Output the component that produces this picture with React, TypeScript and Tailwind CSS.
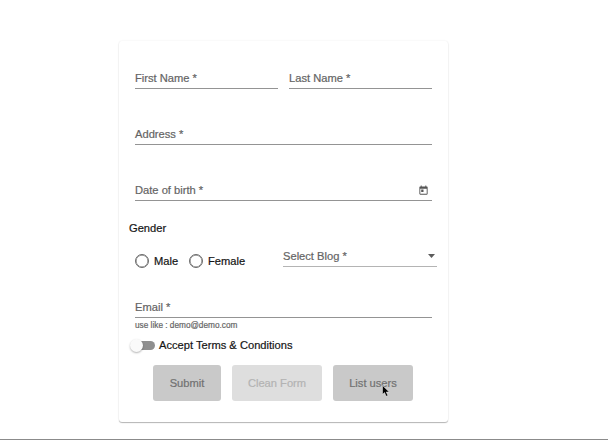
import React from "react";

function Field({ label, className = "", line = "border-[#949494]", children }: { label: string; className?: string; line?: string; children?: React.ReactNode }) {
  return (
    <label className={`flex h-[19px] items-start justify-between border-b text-[#646464] ${line} ${className}`}>
      <span className="whitespace-nowrap leading-4">{label}</span>
      {children}
    </label>
  );
}

function Radio({ label, className = "" }: { label: string; className?: string }) {
  return (
    <label className={`flex items-center gap-[5px] text-[#151515] ${className}`}>
      <span className="size-[14px] shrink-0 rounded-full border border-[#6b6b6b] shadow-[inset_0_0_0_0.5px_#6b6b6b]" />
      <span className="leading-4">{label}</span>
    </label>
  );
}

export default function App() {
  return (
    <main className="flex h-[440px] w-[608px] flex-col border-b border-[#8b8b8b] bg-white pt-[41px] font-['Liberation_Sans',Arial,sans-serif] text-[11.15px] [-webkit-text-stroke:0.2px]">
      <form className="ml-[119px] flex h-[381px] w-[329px] flex-col rounded-[3px] bg-white pt-[29px] shadow-[0_1px_1px_rgba(0,0,0,0.28),0_0_2px_rgba(0,0,0,0.08)]">
        <div className="mx-4 flex gap-[11px]">
          <Field label="First Name *" className="flex-1" />
          <Field label="Last Name *" className="flex-1" />
        </div>
        <Field label="Address *" className="mx-4 mt-[37px]" />
        <Field label="Date of birth *" className="mx-4 mt-[37px]">
          <svg className="mt-[3px] mr-[3px] size-[11px]" viewBox="0 0 24 24" fill="#555">
            <path d="M19 3h-1V1h-2v2H8V1H6v2H5c-1.1 0-2 .9-2 2v14c0 1.1.9 2 2 2h14c1.1 0 2-.9 2-2V5c0-1.1-.9-2-2-2zm0 16H5V8h14v11zM7 10h5v5H7z" />
          </svg>
        </Field>
        <div className="mt-[19px] ml-[10px] leading-4 text-[#151515]">Gender</div>
        <div className="mt-3 mr-[11px] ml-4 flex h-6 items-start">
          <Radio label="Male" className="mt-[5px] w-[54px]" />
          <Radio label="Female" className="mt-[5px] w-[94px]" />
          <Field label="Select Blog *" className="min-w-0 flex-1" line="border-[#b4b4b4]">
            <svg className="mt-[6px] mr-[2px] h-[4px] w-[7px]" viewBox="0 0 7 4" fill="#5c5c5c">
              <path d="M0 0h7L3.5 4z" />
            </svg>
          </Field>
        </div>
        <Field label="Email *" className="mx-4 mt-[27px]" />
        <div className="mt-[2px] ml-4 text-[8.25px] leading-3 text-[#666]">use like : demo@demo.com</div>
        <label className="mt-[5px] ml-[11px] flex h-4 items-center gap-[4px] text-[#151515]">
          <span className="flex w-[25px] items-center">
            <span className="z-10 size-[13px] shrink-0 rounded-full bg-[#fafafa] shadow-[0_1px_2px_rgba(0,0,0,0.3)]" />
            <span className="-ml-[8px] h-[9px] w-5 rounded-full bg-[#8f8f8f]" />
          </span>
          <span className="leading-4">Accept Terms &amp; Conditions</span>
        </label>
        <div className="mt-3 ml-[34px] flex gap-[11px]">
          <button type="button" className="h-9 w-[68px] rounded-[3px] bg-[#c9c9c9] text-[#717171]">Submit</button>
          <button type="button" className="h-9 w-[90px] rounded-[3px] bg-[#dedede] text-[#b3b3b3]">Clean Form</button>
          <button type="button" className="relative h-9 w-[80px] rounded-[3px] bg-[#c9c9c9] text-[#717171]">
            List users
            <svg className="absolute top-5 left-[49px] h-[12px] w-[8px]" viewBox="0 0 8 12">
              <path d="M.5.5v9l2-2 1.7 3.8 1.7-.8-1.7-3.5h3z" fill="#000" stroke="#fff" strokeWidth=".45" />
            </svg>
          </button>
        </div>
      </form>
    </main>
  );
}
